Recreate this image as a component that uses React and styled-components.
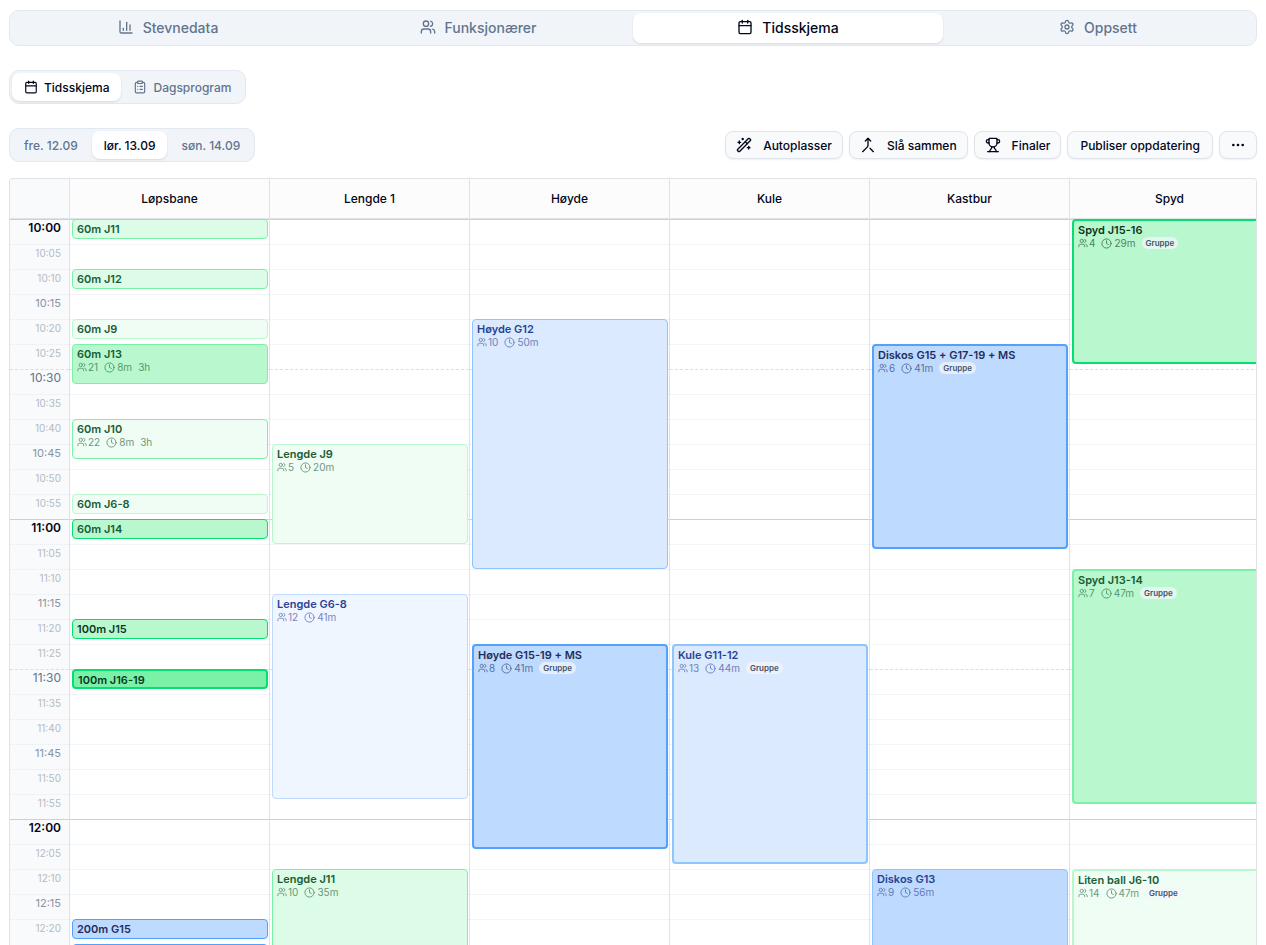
import React from "react";
import styled, { createGlobalStyle, css } from "styled-components";
import {
  Calendar,
  ChartColumn,
  ClipboardList,
  Clock,
  Ellipsis,
  Merge,
  Settings,
  Trophy,
  Users,
  WandSparkles,
} from "lucide-react";

const GlobalStyle = createGlobalStyle`
  * {
    box-sizing: border-box;
  }

  body {
    margin: 0;
    background: #fff;
    color: #020618;
    font-family: Inter, "Liberation Sans", sans-serif;
  }

  button {
    font-family: inherit;
    cursor: pointer;
  }
`;

const Page = styled.main`
  display: flex;
  flex-direction: column;
  height: 100vh;
  padding: 10px 9px 0;
  overflow: hidden;
`;

const tabList = css`
  padding: 2px;
  border: 1px solid #e2e8f0;
  border-radius: 10px;
  background: #f1f5f9;
`;

const MainTabs = styled.nav`
  ${tabList}
  display: grid;
  grid-template-columns: repeat(4, 1fr);
  flex: none;
  height: 36px;
  padding: 2px 3px;
`;

const SmallTabs = styled.div`
  ${tabList}
  display: flex;
  flex: none;
  align-self: flex-start;
  gap: ${({ $gap }) => $gap || 0}px;
  height: 34px;
`;

const Tab = styled.button`
  display: flex;
  align-items: center;
  justify-content: center;
  gap: ${({ $large }) => ($large ? "9px" : "6px")};
  padding: ${({ $large }) => ($large ? "0 12px 2px" : "0 12px")};
  border: 0;
  border-radius: 8px;
  background: ${({ $active }) => ($active ? "#fff" : "transparent")};
  box-shadow: ${({ $active }) =>
    $active ? "0 1px 2px rgba(15, 23, 42, 0.12)" : "none"};
  color: ${({ $active }) => ($active ? "#020618" : "#62748e")};
  font-size: ${({ $large }) => ($large ? "14px" : "12px")};
  font-weight: 500;
  white-space: nowrap;
`;

const ViewRow = styled.div`
  display: flex;
  margin-top: 24px;
`;

const Toolbar = styled.div`
  display: flex;
  align-items: center;
  justify-content: space-between;
  margin: 24px 0 16px;
`;

const Actions = styled.div`
  display: flex;
  gap: 6px;
`;

const ActionButton = styled.button`
  display: flex;
  align-items: center;
  gap: 11px;
  height: 28px;
  padding: 0 ${({ $withIcon }) => ($withIcon ? "10px" : "12px")};
  border: 1px solid #dfe4ea;
  border-radius: 8px;
  background: #f8fafc;
  box-shadow: 0 1px 2px rgba(15, 23, 42, 0.06);
  color: #020618;
  font-size: 12px;
  font-weight: 500;
  white-space: nowrap;
`;

const Schedule = styled.section`
  display: grid;
  grid-template-columns: 60px repeat(6, 200px);
  grid-template-rows: 40px auto;
  flex: 1;
  min-height: 0;
  border: 1px solid #dfe2e6;
  border-bottom: 0;
  border-radius: 4px 4px 0 0;
  overflow: hidden;
`;

const HeaderCell = styled.div`
  display: flex;
  align-items: center;
  justify-content: center;
  border-right: 1px solid #dfe2e6;
  border-bottom: 1px solid #dfe2e6;
  background: ${({ $corner }) => ($corner ? "#f8fafc" : "#fcfcfc")};
  font-size: 12px;
  font-weight: 500;
`;

/* one grid row is one minute */
const Lane = styled.div`
  display: grid;
  grid-template-columns: minmax(0, 1fr);
  grid-template-rows: repeat(150, 5px);
  border-right: 1px solid #dfe2e6;
  background: ${({ $times }) => ($times ? "#f8fafc" : "#fff")};
`;

const slotBorders = {
  hour: "1px solid #cdd1d5",
  half: "1px dashed #dcdfe2",
  quarter: "1px dotted #e8ebee",
  minor: "1px dotted #e8ebee",
};

const Slot = styled.div`
  grid-column: 1;
  grid-row: ${({ $start }) => $start + 1} / span 5;
  border-top: ${({ $kind }) => slotBorders[$kind]};
`;

const timeText = {
  hour: css`
    color: #020618;
    font-size: 12px;
    font-weight: 600;
  `,
  half: css`
    color: #62748e;
    font-size: 12px;
  `,
  quarter: css`
    color: #8794a4;
    font-size: 11px;
  `,
  minor: css`
    color: #b4bac2;
    font-size: 10px;
  `,
};

const TimeSlot = styled(Slot)`
  padding-right: 8px;
  line-height: 16px;
  text-align: right;
  ${({ $kind }) => timeText[$kind]}
`;

const Event = styled.article`
  grid-column: 1;
  grid-row: ${({ $start }) => $start + 1} / span ${({ $length }) => $length};
  z-index: 1;
  margin: 0 1px 0 2px;
  padding: 2px 4px;
  border: ${({ $thick }) => ($thick ? "2px" : "1px")} solid
    ${({ $border }) => $border};
  border-radius: 4px;
  background: ${({ $fill }) => $fill};
  color: ${({ $ink }) => $ink};
  overflow: hidden;
`;

const EventTitle = styled.h3`
  margin: 0;
  font-size: 11px;
  font-weight: 600;
  line-height: 14px;
  white-space: nowrap;
  opacity: 0.95;
`;

const Meta = styled.div`
  display: flex;
  align-items: center;
  gap: 6px;
  height: 12px;
  font-size: 10px;
  line-height: 12px;
`;

const MetaItem = styled.span`
  display: flex;
  align-items: center;
  gap: ${({ $gap }) => $gap || 0}px;
  opacity: 0.6;
`;

const Badge = styled.span`
  padding: 0 4px;
  border-radius: 6px;
  background: rgba(241, 245, 249, 0.75);
  color: #45556c;
  font-size: 8px;
  font-weight: 600;
  line-height: 12px;
`;

const green = { 50: "#f0fdf4", 100: "#dcfce7", 200: "#b9f8cf", 300: "#7bf1a8", 400: "#05df72", 900: "#0d542b", 950: "#032e15" };
const blue = { 50: "#eff6ff", 100: "#dbeafe", 200: "#bedbff", 300: "#8ec5ff", 400: "#51a2ff", 900: "#1c398e", 950: "#162456" };

// start and length are minutes, start counted from 10:00
const lanes = [
  {
    name: "Løpsbane",
    events: [
      { title: "60m J11", start: 0, length: 4, tone: green, fill: 100, border: 300 },
      { title: "60m J12", start: 10, length: 4, tone: green, fill: 100, border: 300 },
      { title: "60m J9", start: 20, length: 4, tone: green, fill: 50, border: 200 },
      { title: "60m J13", start: 25, length: 8, tone: green, fill: 200, border: 300, people: 21, time: "8m", heats: "3h" },
      { title: "60m J10", start: 40, length: 8, tone: green, fill: 50, border: 300, people: 22, time: "8m", heats: "3h" },
      { title: "60m J6-8", start: 55, length: 4, tone: green, fill: 50, border: 200 },
      { title: "60m J14", start: 60, length: 4, tone: green, fill: 200, border: 400 },
      { title: "100m J15", start: 80, length: 4, tone: green, fill: 200, border: 400, ink: 950 },
      { title: "100m J16-19", start: 90, length: 4, tone: green, fill: 300, border: 400, ink: 950, thick: true },
      { title: "200m G15", start: 140, length: 4, tone: blue, fill: 200, border: 400, ink: 950 },
      { start: 145, length: 4, tone: blue, fill: 200, border: 400 },
    ],
  },
  {
    name: "Lengde 1",
    events: [
      { title: "Lengde J9", start: 45, length: 20, tone: green, fill: 50, border: 200, people: 5, time: "20m" },
      { title: "Lengde G6-8", start: 75, length: 41, tone: blue, fill: 50, border: 200, people: 12, time: "41m" },
      { title: "Lengde J11", start: 130, length: 20, tone: green, fill: 100, border: 300, people: 10, time: "35m" },
    ],
  },
  {
    name: "Høyde",
    events: [
      { title: "Høyde G12", start: 20, length: 50, tone: blue, fill: 100, border: 300, people: 10, time: "50m" },
      { title: "Høyde G15-19 + MS", start: 85, length: 41, tone: blue, fill: 200, border: 400, ink: 950, people: 8, time: "41m", group: true },
    ],
  },
  {
    name: "Kule",
    events: [
      { title: "Kule G11-12", start: 85, length: 44, tone: blue, fill: 100, border: 300, people: 13, time: "44m", group: true },
    ],
  },
  {
    name: "Kastbur",
    events: [
      { title: "Diskos G15 + G17-19 + MS", start: 25, length: 41, tone: blue, fill: 200, border: 400, ink: 950, people: 6, time: "41m", group: true },
      { title: "Diskos G13", start: 130, length: 20, tone: blue, fill: 200, border: 300, people: 9, time: "56m" },
    ],
  },
  {
    name: "Spyd",
    events: [
      { title: "Spyd J15-16", start: 0, length: 29, tone: green, fill: 200, border: 400, ink: 950, people: 4, time: "29m", group: true },
      { title: "Spyd J13-14", start: 70, length: 47, tone: green, fill: 200, border: 300, people: 7, time: "47m", group: true },
      { title: "Liten ball J6-10", start: 130, length: 20, tone: green, fill: 50, border: 200, people: 14, time: "47m", group: true },
    ],
  },
];

const kindOf = (minute) => {
  if (minute % 60 === 0) return "hour";
  if (minute % 30 === 0) return "half";
  if (minute % 15 === 0) return "quarter";
  return "minor";
};

const slots = Array.from({ length: 29 }, (_, i) => {
  const start = i * 5;
  const hour = 10 + Math.floor(start / 60);
  const minute = String(start % 60).padStart(2, "0");
  return { start, kind: kindOf(start), label: `${hour}:${minute}` };
});

const mainTabs = [
  { label: "Stevnedata", Icon: ChartColumn },
  { label: "Funksjonærer", Icon: Users },
  { label: "Tidsskjema", Icon: Calendar },
  { label: "Oppsett", Icon: Settings },
];

const days = ["fre. 12.09", "lør. 13.09", "søn. 14.09"];

const EventCard = ({ event }) => {
  const { title, start, length, tone, fill, border, ink = 900, people, time, heats, group, thick } = event;

  return (
    <Event
      $start={start}
      $length={length}
      $fill={tone[fill]}
      $border={tone[border]}
      $ink={tone[ink]}
      $thick={group || thick}
    >
      {title && <EventTitle>{title}</EventTitle>}
      {people && (
        <Meta>
          <MetaItem $gap={1}>
            <Users size={10} />
            {people}
          </MetaItem>
          <MetaItem $gap={2}>
            <Clock size={11} />
            {time}
          </MetaItem>
          {heats && <MetaItem>{heats}</MetaItem>}
          {group && <Badge>Gruppe</Badge>}
        </Meta>
      )}
    </Event>
  );
};

const App = () => {
  return (
    <>
      <GlobalStyle />
      <Page>
        <MainTabs>
          {mainTabs.map(({ label, Icon }) => (
            <Tab key={label} $large $active={label === "Tidsskjema"}>
              <Icon size={16} />
              {label}
            </Tab>
          ))}
        </MainTabs>

        <ViewRow>
          <SmallTabs>
            <Tab $active>
              <Calendar size={14} />
              Tidsskjema
            </Tab>
            <Tab>
              <ClipboardList size={14} />
              Dagsprogram
            </Tab>
          </SmallTabs>
        </ViewRow>

        <Toolbar>
          <SmallTabs $gap={2}>
            {days.map((day) => (
              <Tab key={day} $active={day === "lør. 13.09"}>
                {day}
              </Tab>
            ))}
          </SmallTabs>
          <Actions>
            <ActionButton $withIcon>
              <WandSparkles size={16} />
              Autoplasser
            </ActionButton>
            <ActionButton $withIcon>
              <Merge size={16} />
              Slå sammen
            </ActionButton>
            <ActionButton $withIcon>
              <Trophy size={16} />
              Finaler
            </ActionButton>
            <ActionButton>Publiser oppdatering</ActionButton>
            <ActionButton $withIcon aria-label="Flere valg">
              <Ellipsis size={16} />
            </ActionButton>
          </Actions>
        </Toolbar>

        <Schedule>
          <HeaderCell $corner />
          {lanes.map(({ name }) => (
            <HeaderCell key={name}>{name}</HeaderCell>
          ))}
          <Lane $times>
            {slots.map(({ start, kind, label }) => (
              <TimeSlot key={start} $start={start} $kind={kind}>
                {label}
              </TimeSlot>
            ))}
          </Lane>
          {lanes.map(({ name, events }) => (
            <Lane key={name}>
              {slots.map(({ start, kind }) => (
                <Slot key={start} $start={start} $kind={kind} />
              ))}
              {events.map((event) => (
                <EventCard key={event.start} event={event} />
              ))}
            </Lane>
          ))}
        </Schedule>
      </Page>
    </>
  );
};

export default App;
